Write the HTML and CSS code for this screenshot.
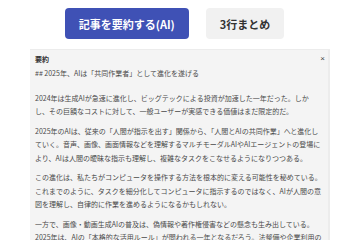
FILE: index.html
```html
<!DOCTYPE html>
<html lang="ja">
<head>
  <meta charset="UTF-8" />
  <meta name="viewport" content="width=device-width, initial-scale=1.0" />
  <title>記事の要約</title>
  <link rel="stylesheet" href="styles.css">
</head>
<body>

<div class="botones-resumen">
  <button class="btn-resumir">記事を要約する(AI)</button>
  <button class="btn-tres-lineas">3行まとめ</button>
</div>

<section class="panel-resumen">
  <div class="panel-cabecera">
    <span class="panel-titulo">要約</span>
    <button class="panel-cerrar">×</button>
  </div>
  <div class="panel-cuerpo">
    <p class="resumen-titulo">## 2025年、AIは「共同作業者」として進化を遂げる</p>
    <p>2024年は生成AIが急速に進化し、ビッグテックによる投資が加速した一年だった。しかし、その巨額なコストに対して、一般ユーザーが実感できる価値はまだ限定的だ。</p>
    <p>2025年のAIは、従来の「人間が指示を出す」関係から、「人間とAIの共同作業」へと進化していく。音声、画像、画面情報などを理解するマルチモーダルAIやAIエージェントの登場により、AIは人間の曖昧な指示も理解し、複雑なタスクをこなせるようになりつつある。</p>
    <p>この進化は、私たちがコンピュータを操作する方法を根本的に変える可能性を秘めている。これまでのように、タスクを細分化してコンピュータに指示するのではなく、AIが人間の意図を理解し、自律的に作業を進めるようになるかもしれない。</p>
    <p>一方で、画像・動画生成AIの普及は、偽情報や著作権侵害などの懸念も生み出している。2025年は、AIの「本格的な活用ルール」が問われる一年となるだろう。法整備や企業利用のガイドライン作りが進むことが期待される。</p>
  </div>
</section>

</body>
</html>
```

FILE: styles.css
```css
body {
  margin: 8px 0 0;
  font-family: "Noto Sans CJK JP", "Noto Sans", sans-serif;
  background-color: #fff;
  color: #4a4a4a;
  overflow: hidden;
}

.botones-resumen {
  display: flex;
  justify-content: center;
  gap: 17px;
  padding-right: 11px;
}

.botones-resumen button {
  height: 31px;
  padding: 0 14px;
  border: none;
  border-radius: 4px;
  font-family: inherit;
  font-size: 11px;
  font-weight: bold;
  cursor: pointer;
}

.btn-resumir {
  background-color: #3f51b5;
  color: white;
}

.btn-tres-lineas {
  background-color: #f1f1f1;
  color: #333;
}

.panel-resumen {
  margin: 10px 30px 0;
  background: #f4f4f4;
  border-top: 1px solid #ececec;
  border-right: 2px solid #ececec;
}

.panel-cabecera {
  display: flex;
  justify-content: space-between;
  align-items: center;
  height: 17px;
  padding: 0 3px 0 5px;
}

.panel-titulo {
  font-size: 7px;
  font-weight: bold;
  color: #333;
}

.panel-cerrar {
  border: none;
  background: none;
  padding: 0;
  font-size: 8px;
  color: #444;
  cursor: pointer;
}

.panel-cuerpo {
  padding: 0 6px 10px 5px;
  font-size: 7px;
  line-height: 13.5px;
}

.panel-cuerpo p {
  margin: 0 0 6px;
}

.panel-cuerpo .resumen-titulo {
  margin-bottom: 11px;
}
```
